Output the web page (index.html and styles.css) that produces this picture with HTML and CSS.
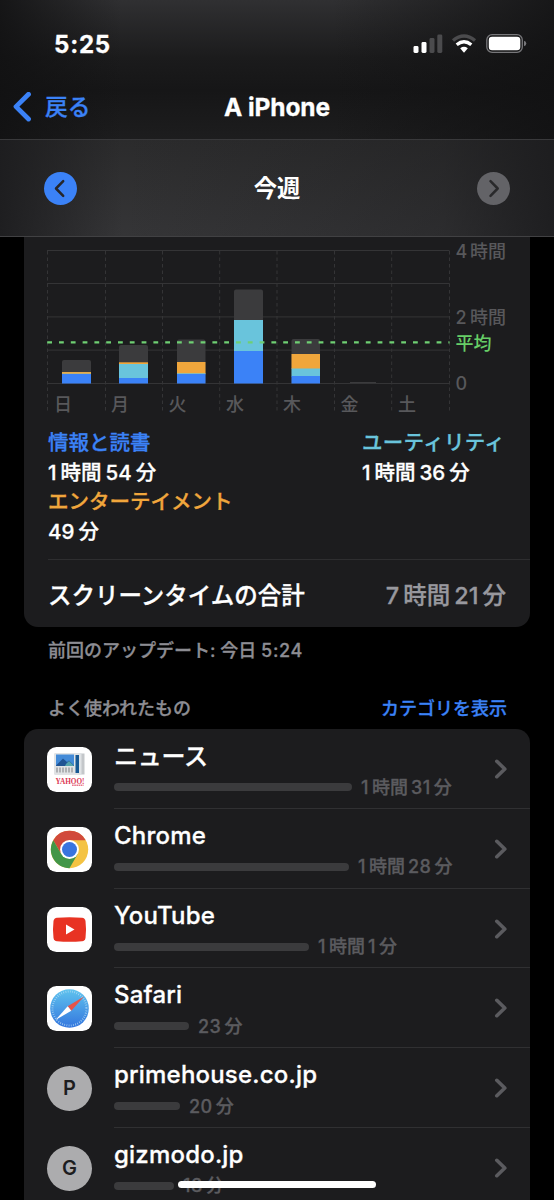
FILE: index.html
```html
<!DOCTYPE html>
<html lang="ja">
<head>
<meta charset="utf-8">
<title>A iPhone</title>
<link rel="stylesheet" href="styles.css">
</head>
<body>
<div class="screen">
  <header class="top">
    <div class="status">
      <span class="clock">5:25</span>
      <svg class="status-icons" width="116" height="24" viewBox="0 0 116 24">
        <rect x="0.5" y="14" width="5" height="7" rx="1.4" fill="#fff"/>
        <rect x="8.5" y="10" width="5" height="11" rx="1.4" fill="#fff"/>
        <rect x="16.5" y="6" width="5" height="15" rx="1.4" fill="#4b4b4d"/>
        <rect x="24.300" y="2.500" width="5" height="18.500" rx="1.4" fill="#4b4b4d"/>
        <g fill="none" stroke-width="3.300">
          <path d="M40 8.600Q51 -0.500 62 8.600" stroke="#4b4b4d"/>
          <path d="M43.700 12.800Q51 6.800 58.300 12.800" stroke="#fff"/>
        </g>
        <path d="M47.200 16.200Q51 13.300 54.800 16.200L51.500 20.200Q51 20.800 50.500 20.200Z" fill="#fff"/>
        <rect x="73.800" y="2.700" width="35.500" height="17.600" rx="5.300" fill="none" stroke="#77777a" stroke-width="1.300"/>
        <rect x="75.800" y="4.700" width="31.500" height="13.600" rx="3.300" fill="#fff"/>
        <path d="M111 8.800Q113.300 9.500 113.300 11.500T111 14.200Z" fill="#77777a"/>
      </svg>
    </div>
    <div class="nav">
      <a class="back"><svg width="19" height="30" viewBox="0 0 19 30"><path d="M16.500 2.300L4 14.600L16.500 27" fill="none" stroke="#3b82f7" stroke-width="4.800" stroke-linecap="round" stroke-linejoin="round"/></svg><span>戻る</span></a>
      <h1>A iPhone</h1>
    </div>
  </header>
  <div class="week">
    <svg width="33" height="33" viewBox="0 0 33 33"><circle cx="16.500" cy="16.500" r="16.500" fill="#3b82f7"/><path d="M19.200 9.200L12 16.500L19.200 23.800" fill="none" stroke="#26262a" stroke-width="2.500" stroke-linecap="round" stroke-linejoin="round"/></svg>
    <h2>今週</h2>
    <svg width="33" height="33" viewBox="0 0 33 33"><circle cx="16.500" cy="16.500" r="16.500" fill="#636367"/><path d="M13.500 9.200L20.700 16.500L13.500 23.800" fill="none" stroke="#29292b" stroke-width="2.500" stroke-linecap="round" stroke-linejoin="round"/></svg>
  </div>

  <section class="card summary">
    <svg class="chart" width="506" height="183" viewBox="24 237 506 183">
      <g stroke="#343436">
        <path d="M47 250.500H449.500M47 283.500H449.500M47 316.900H449.500M47 350.100H449.500M47 383.500H449.500"/>
        <path stroke-dasharray="3.500 3" d="M47.500 251V413M105.500 251V413M162.500 251V413M219.700 251V413M277 251V413M334.500 251V413M391.700 251V413M449.500 251V413"/>
      </g>
      <g fill="#3b3b3d">
        <path d="M62 383V362Q62 360 64 360H89Q91 360 91 362V383Z"/>
        <path d="M119 383V347Q119 345 121 345H146Q148 345 148 347V383Z"/>
        <path d="M177 383V341.500Q177 339.500 179 339.500H203.500Q205.500 339.500 205.500 341.500V383Z"/>
        <path d="M234 383V291.500Q234 289.500 236 289.500H261Q263 289.500 263 291.500V383Z"/>
        <path d="M291.500 383V341Q291.500 339 293.500 339H318Q320 339 320 341V383Z"/>
        <path d="M350 383V382H376V383Z"/>
      </g>
      <g fill="#f0a63c">
        <rect x="62" y="372" width="29" height="2"/>
        <rect x="119" y="362.300" width="29" height="2"/>
        <rect x="177" y="362" width="28.500" height="12"/>
        <rect x="291.500" y="354" width="28.500" height="15"/>
      </g>
      <g fill="#69c4dc">
        <rect x="62" y="372.800" width="29" height="1" opacity=".4"/>
        <rect x="119" y="364" width="29" height="14"/>
        <rect x="177" y="373.300" width="28.500" height="1"/>
        <rect x="234" y="320" width="29" height="31"/>
        <rect x="291.500" y="368.500" width="28.500" height="8"/>
      </g>
      <g fill="#3b82f7">
        <rect x="62" y="374" width="29" height="9.500"/>
        <rect x="119" y="378" width="29" height="5.500"/>
        <rect x="177" y="374" width="28.500" height="9.500"/>
        <rect x="234" y="351" width="29" height="32.500"/>
        <rect x="291.500" y="376" width="28.500" height="7.500"/>
      </g>
      <path d="M47.200 342.400H449.500" stroke="#6fcf73" stroke-width="2.200" stroke-dasharray="4.800 7"/>
      <g class="axis">
        <text x="54" y="410.500">日</text><text x="111" y="410.500">月</text><text x="168.500" y="410.500">火</text><text x="226" y="410.500">水</text><text x="283" y="410.500">木</text><text x="340.500" y="410.500">金</text><text x="398" y="410.500">土</text>
      </g>
      <g class="axis">
        <text x="455.500" y="257.500">4</text><text x="470" y="257.500">時間</text>
        <text x="455.500" y="323.800">2</text><text x="470" y="323.800">時間</text>
        <text x="455.500" y="390">0</text>
        <text class="avg" x="455.500" y="349.500">平均</text>
      </g>
    </svg>
    <div class="legend">
      <div><b class="blue">情報と読書</b><span class="dur"><i>1</i>時間<i>54</i>分</span><b class="orange">エンターテイメント</b><span class="dur"><i>49</i>分</span></div>
      <div class="right"><b class="cyan">ユーティリティ</b><span class="dur"><i>1</i>時間<i>36</i>分</span></div>
    </div>
    <div class="total"><span>スクリーンタイムの合計</span><span class="dur big"><i>7</i>時間<i>21</i>分</span></div>
  </section>
  <p class="updated">前回のアップデート: 今日 <span>5:24</span></p>
  <div class="section-head"><span>よく使われたもの</span><a>カテゴリを表示</a></div>

  <section class="card list">
    <div class="row">
      <svg class="icon" viewBox="0 0 45 45"><rect width="45" height="45" rx="9.500" fill="#fff"/><rect x="7.500" y="6.500" width="30" height="21" fill="#c4c7ca"/><rect x="7.500" y="6.500" width="27" height="21" fill="#e0e3e5"/><rect x="9" y="7.500" width="18" height="11.500" fill="#438bd8"/><path d="M9 18.500L16 11.500L20 15L22 13.500L27 18.500V19H9Z" fill="#205493"/><path d="M19 17L22 14L27 19H18Z" fill="#55a4ac"/><rect x="28.500" y="8" width="3.500" height="18" fill="#165894"/><path d="M10 20.500V25.500M13 20.500V25.500M16 20.500V25.500M19 20.500V25.500M22 20.500V25.500M25 20.500V25.500" stroke="#9da1a4" stroke-width="1.500"/><text class="yahoo" x="8.500" y="36.800" textLength="29" lengthAdjust="spacingAndGlyphs">YAHOO!</text><path d="M25 38.300H36.500" stroke="#e8788c" stroke-width="1.600" stroke-dasharray="1.700 .5"/></svg>
      <div class="body"><div class="name jp">ニュース</div><div class="usage"><div class="bar" style="width:238px"></div><span class="dur small"><i>1</i>時間<i>31</i>分</span></div></div>
      <svg class="chev" viewBox="0 0 14 20"><path d="M2.800 2.300L10.800 10L2.800 17.700"/></svg>
    </div>
    <div class="row">
      <svg class="icon" viewBox="0 0 45 45"><rect width="45" height="45" rx="9.500" fill="#fff"/><circle cx="22.500" cy="22.500" r="18.700" fill="#f4c343"/><path d="M22.500 13.200H38.700A18.700 18.700 0 0 0 6.300 13.200L14.400 27.200L22.500 22.500Z" fill="#d14a3b"/><path d="M6.300 13.200A18.700 18.700 0 0 0 22.500 41.200L30.600 27.200L14.400 27.200Z" fill="#429648"/><circle cx="22.500" cy="22.500" r="9.400" fill="#fff"/><circle cx="22.500" cy="22.500" r="7.500" fill="#3974df"/></svg>
      <div class="body"><div class="name">Chrome</div><div class="usage"><div class="bar" style="width:235px"></div><span class="dur small"><i>1</i>時間<i>28</i>分</span></div></div>
      <svg class="chev" viewBox="0 0 14 20"><path d="M2.800 2.300L10.800 10L2.800 17.700"/></svg>
    </div>
    <div class="row">
      <svg class="icon" viewBox="0 0 45 45"><rect width="45" height="45" rx="9.500" fill="#fff"/><path d="M10 10.700Q22.500 9.600 35 10.700Q38 11 38.500 14Q39.500 22.500 38.500 31Q38 34 35 34.300Q22.500 35.400 10 34.300Q7 34 6.500 31Q5.500 22.500 6.500 14Q7 11 10 10.700Z" fill="#e83323"/><path d="M19 17.500L27.500 22.500L19 27.500Z" fill="#fff"/></svg>
      <div class="body"><div class="name">YouTube</div><div class="usage"><div class="bar" style="width:195px"></div><span class="dur small"><i>1</i>時間<i>1</i>分</span></div></div>
      <svg class="chev" viewBox="0 0 14 20"><path d="M2.800 2.300L10.800 10L2.800 17.700"/></svg>
    </div>
    <div class="row">
      <svg class="icon" viewBox="0 0 45 45"><defs><linearGradient id="sea" x2="0" y2="1"><stop stop-color="#5fc3ee"/><stop offset="1" stop-color="#3476de"/></linearGradient></defs><rect width="45" height="45" rx="9.500" fill="#fff"/><circle cx="22.500" cy="22.500" r="19.300" fill="url(#sea)"/><circle cx="22.500" cy="22.500" r="17" fill="none" stroke="#b7dcf5" stroke-width="2" stroke-dasharray=".6 1.625"/><path d="M37 10.500L20.700 20.300L24.300 24.700Z" fill="#e65349"/><path d="M8.500 34L20.700 20.300L24.300 24.700Z" fill="#fff"/></svg>
      <div class="body"><div class="name">Safari</div><div class="usage"><div class="bar" style="width:75px"></div><span class="dur small"><i>23</i>分</span></div></div>
      <svg class="chev" viewBox="0 0 14 20"><path d="M2.800 2.300L10.800 10L2.800 17.700"/></svg>
    </div>
    <div class="row">
      <div class="icon letter">P</div>
      <div class="body"><div class="name">primehouse.co.jp</div><div class="usage"><div class="bar" style="width:66px"></div><span class="dur small"><i>20</i>分</span></div></div>
      <svg class="chev" viewBox="0 0 14 20"><path d="M2.800 2.300L10.800 10L2.800 17.700"/></svg>
    </div>
    <div class="row">
      <div class="icon letter">G</div>
      <div class="body"><div class="name">gizmodo.jp</div><div class="usage"><div class="bar" style="width:60px"></div><span class="dur small"><i>18</i>分</span></div></div>
      <svg class="chev" viewBox="0 0 14 20"><path d="M2.800 2.300L10.800 10L2.800 17.700"/></svg>
    </div>
  </section>
  <div class="home"></div>
</div>
</body>
</html>
```
FILE: styles.css
```css
* { box-sizing: border-box; }
body { margin: 0; background: #000; }
.screen {
  position: relative;
  width: 554px;
  height: 1200px;
  overflow: hidden;
  background: #000;
  color: #fff;
  font-family: Inter, "Noto Sans CJK JP", sans-serif;
  font-weight: 500;
  -webkit-text-stroke: .3px;
  white-space: nowrap;
  text-autospace: no-autospace;
}
svg { display: block; flex: none; }
h1, h2, p { margin: 0; font-weight: 600; }
.top {
  height: 140px;
  border-bottom: 1px solid #39393b;
  background:
    linear-gradient(90deg, rgba(17,17,18,.85), rgba(17,17,18,0) 22%, rgba(17,17,18,0) 60%, rgba(17,17,18,.8)),
    linear-gradient(#303032, #1b1b1c 42%, #161617 65%, #1d1d1e);
}
.status { height: 76px; padding: 32px 25px 0 54px; display: flex; justify-content: space-between; }
.clock { font-size: 24px; line-height: 25px; font-weight: 700; letter-spacing: .8px; }
.nav { display: grid; grid-template-columns: 140px 1fr 140px; height: 62px; align-items: center; }
.back { display: flex; align-items: center; padding-left: 12px; gap: 14px; font-size: 22.700px; line-height: 30px; color: #3b82f7; }
.nav h1 { text-align: center; font-size: 24.500px; line-height: 30px; font-weight: 700; letter-spacing: -.1px; margin-top: -1px; }
.week {
  height: 97px;
  padding: 0 44px;
  display: flex;
  align-items: center;
  justify-content: space-between;
  border-bottom: 1px solid #414143;
  background:
    linear-gradient(90deg, rgba(28,28,30,.9), rgba(28,28,30,0) 22%, rgba(28,28,30,.2) 60%, rgba(28,28,30,.35) 80%, rgba(28,28,30,.9)),
    linear-gradient(#2b2b2c, #353537);
}
.week h2 { font-size: 23.300px; line-height: 32px; padding-top: 2px; -webkit-text-stroke: 0; }
.card { margin: 0 24px; background: #1c1c1e; }
.summary { height: 390px; border-radius: 0 0 14px 14px; }
.axis { fill: #58585b; stroke: none; font-size: 18px; -webkit-text-stroke: .3px #58585b; }
.axis .avg { fill: #67ce67; -webkit-text-stroke-color: #67ce67; }
.legend { height: 139px; margin: 0 24px; padding-top: 8px; display: flex; justify-content: space-between; }
.legend div { display: flex; flex-direction: column; font-size: 20.500px; line-height: 29.700px; }
.legend .right { width: 144px; }
.legend b { font-weight: 500; }
.blue { color: #3b82f7; }
.orange { color: #f0a63c; }
.legend .cyan { color: #69c4dc; letter-spacing: .3px; }
i { font-style: normal; margin: 0 4px; }
i:first-child { margin-left: 0; }
.total { height: 68px; margin-left: 24px; padding-right: 24px; border-top: 1px solid #2e2e30; display: flex; align-items: center; justify-content: space-between; font-size: 23.500px; }
.big { color: #98989e; }
.updated { margin-left: 48px; padding-top: 10px; height: 68px; font-size: 18px; line-height: 28px; font-weight: 500; color: #8d8d93; }
.updated span { letter-spacing: .7px; }
.section-head { height: 34px; padding: 1px 47px 0 48px; display: flex; justify-content: space-between; font-size: 18px; line-height: 26px; color: #8d8d93; }
.section-head a { color: #3b82f7; }
.list { border-radius: 14px 14px 0 0; }
.row { height: 79.800px; display: flex; padding-left: 23px; position: relative; }
.icon { width: 45px; height: 45px; margin-top: 18px; flex: none; }
.letter { border-radius: 50%; background: #acacae; color: #1d1d1f; text-align: center; font-size: 20px; line-height: 45px; font-weight: 600; -webkit-text-stroke: 0; }
.body { flex: 1; margin-left: 22px; border-bottom: 1px solid #303032; padding-top: 10px; }
.row:last-child .body { border: 0; }
.name { height: 34px; font-size: 24px; line-height: 33px; letter-spacing: .2px; }
.name.jp { line-height: 35px; letter-spacing: -.3px; }
.usage { display: flex; align-items: center; height: 28px; gap: 9px; }
.bar { height: 8px; border-radius: 4px; background: #3b3b3d; flex: none; }
.small { font-size: 18px; line-height: 28px; color: #5b5b5f; padding-top: 1px; }
.small i { margin: 0 3px; letter-spacing: .5px; }
.small i:first-child { margin-left: 0; }
.chev { position: absolute; right: 22px; top: 30px; width: 14px; height: 20px; fill: none; stroke: #5b5b5f; stroke-width: 3.600; stroke-linecap: round; stroke-linejoin: round; }
.yahoo { font: 700 8px "Liberation Serif", serif; fill: #dc3855; stroke: none; -webkit-text-stroke: 0; }
.home { position: absolute; left: 178px; top: 1181px; width: 198px; height: 7px; border-radius: 4px; background: #fff; }
```
